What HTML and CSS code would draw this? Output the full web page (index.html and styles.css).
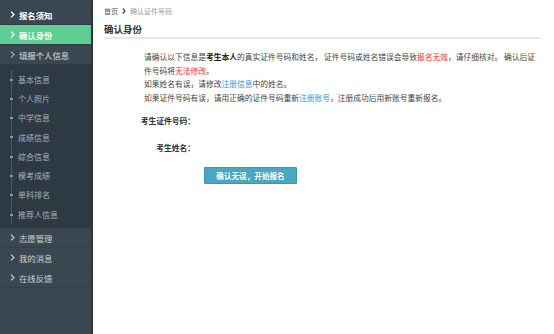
FILE: index.html
```html
<!DOCTYPE html>
<html lang="zh-CN">
<head>
    <meta charset="UTF-8">
    <meta name="viewport" content="width=device-width, initial-scale=1.0">
    <title>确认身份</title>
    <link rel="stylesheet" href="styles.css">
</head>
<body>
    <div class="layout">
        <aside class="sidebar">
            <ul class="menu">
                <li class="menu-item">
                    <svg class="arrow" width="5" height="7" viewBox="0 0 5 7"><path d="M1 0.6 L4 3.5 L1 6.4" fill="none" stroke="currentColor" stroke-width="1.3"/></svg>
                    报名须知
                </li>
                <li class="menu-item active">
                    <svg class="arrow" width="5" height="7" viewBox="0 0 5 7"><path d="M1 0.6 L4 3.5 L1 6.4" fill="none" stroke="currentColor" stroke-width="1.3"/></svg>
                    确认身份
                </li>
                <li class="menu-item muted">
                    <svg class="arrow" width="5" height="7" viewBox="0 0 5 7"><path d="M1 0.6 L4 3.5 L1 6.4" fill="none" stroke="currentColor" stroke-width="1.1"/></svg>
                    填报个人信息
                </li>
            </ul>
            <ul class="submenu">
                <li>基本信息</li>
                <li>个人照片</li>
                <li>中学信息</li>
                <li>成绩信息</li>
                <li>综合信息</li>
                <li>模考成绩</li>
                <li>单科排名</li>
                <li>推荐人信息</li>
            </ul>
            <ul class="menu lower">
                <li class="menu-item">
                    <svg class="arrow" width="5" height="7" viewBox="0 0 5 7"><path d="M1 0.6 L4 3.5 L1 6.4" fill="none" stroke="currentColor" stroke-width="1.1"/></svg>
                    志愿管理
                </li>
                <li class="menu-item">
                    <svg class="arrow" width="5" height="7" viewBox="0 0 5 7"><path d="M1 0.6 L4 3.5 L1 6.4" fill="none" stroke="currentColor" stroke-width="1.1"/></svg>
                    我的消息
                </li>
                <li class="menu-item">
                    <svg class="arrow" width="5" height="7" viewBox="0 0 5 7"><path d="M1 0.6 L4 3.5 L1 6.4" fill="none" stroke="currentColor" stroke-width="1.1"/></svg>
                    在线反馈
                </li>
            </ul>
        </aside>

        <main class="content">
            <div class="crumbs">
                <a href="#" class="crumb-home">首页</a>
                <svg class="crumb-sep" width="4" height="6" viewBox="0 0 4 6"><path d="M0.8 0.5 L3 3 L0.8 5.5" fill="none" stroke="currentColor" stroke-width="1.2"/></svg>
                <span class="crumb-current">确认证件号码</span>
            </div>
            <h2 class="page-title">确认身份</h2>

            <div class="notice">
                <p>请确认以下信息是<b>考生本人</b>的真实证件号码和姓名， 证件号码或姓名错误会导致<span class="warn">报名无效</span>，请仔细核对。 确认后证件号码将<span class="warn">无法修改</span>。</p>
                <p>如果姓名有误，请修改<a href="#">注册信息</a>中的姓名。</p>
                <p>如果证件号码有误，请用正确的证件号码重新<a href="#">注册账号</a>，注册成功后用新账号重新报名。</p>
            </div>

            <div class="info-grid">
                <div class="info-label">考生证件号码：</div>
                <div class="info-value"></div>
                <div class="info-label">考生姓名：</div>
                <div class="info-value"></div>
                <div></div>
                <div><button class="confirm-button">确认无误，开始报名</button></div>
            </div>
        </main>
    </div>
</body>
</html>
```

FILE: styles.css
```css
body {
    font-family: "Noto Sans CJK SC", "Liberation Sans", sans-serif;
    margin: 0;
    padding: 0;
    background-color: #ffffff;
    color: #333333;
}
ul {
    list-style: none;
    margin: 0;
    padding: 0;
}
.layout {
    display: flex;
    min-height: 334px;
}
.sidebar {
    width: 91px;
    padding-top: 5px;
    background-color: #3a4750;
    border-right: 2px solid #2c363e;
    flex-shrink: 0;
}
.menu-item {
    display: flex;
    align-items: center;
    height: 19px;
    padding-left: 10px;
    border-bottom: 1px solid #303c45;
    font-size: 8.4px;
    font-weight: bold;
    color: #ffffff;
}
.menu-item .arrow {
    margin-right: 4px;
}
.menu-item.active {
    background-color: #5fce95;
}
.menu-item.muted {
    color: #a9b5bd;
}
.lower .menu-item {
    font-weight: normal;
    color: #c9d3da;
    border-bottom-color: #34414a;
}
.submenu {
    position: relative;
    padding: 4.5px 0;
    background-color: #2e3a43;
}
.submenu::before {
    content: "";
    position: absolute;
    left: 11px;
    top: 5px;
    bottom: 5px;
    width: 1px;
    background-color: #4c5862;
}
.submenu li {
    position: relative;
    display: flex;
    align-items: center;
    height: 19.3px;
    padding-left: 18px;
    font-size: 8px;
    color: #a4b0b8;
}
.submenu li::before {
    content: "";
    position: absolute;
    left: 10px;
    top: 9px;
    width: 3px;
    height: 2px;
    background-color: #8d99a1;
}
.content {
    flex: 1;
    padding: 0 13px 0 11px;
}
.crumbs {
    display: flex;
    align-items: center;
    padding-top: 4px;
    height: 13px;
    font-size: 7px;
}
.crumb-home {
    color: #555555;
    text-decoration: none;
}
.crumb-sep {
    margin: 0 4px;
    color: #444444;
}
.crumb-current {
    color: #9a9a9a;
}
.page-title {
    margin: 5px 0 0;
    padding-bottom: 1px;
    font-size: 9.5px;
    line-height: 14px;
    font-weight: bold;
    color: #333333;
    border-bottom: 2px solid #e8e8e8;
}
.notice {
    width: 396px;
    margin: 11px 0 0 40px;
    font-size: 7.75px;
    line-height: 13.5px;
    color: #444444;
}
.notice p {
    margin: 0;
}
.notice b {
    color: #222222;
}
.warn {
    color: #ff2b2b;
}
.notice a {
    color: #2f95e8;
    text-decoration: none;
}
.info-grid {
    display: grid;
    grid-template-columns: 56px 1fr;
    column-gap: 9px;
    row-gap: 13.5px;
    margin: 10px 0 0 35px;
    font-size: 7.75px;
    line-height: 13.5px;
}
.info-label {
    text-align: right;
    white-space: nowrap;
    font-family: "Noto Sans CJK TC", "Noto Sans CJK SC", sans-serif;
    font-weight: bold;
    color: #333333;
}
.confirm-button {
    display: block;
    width: 93px;
    height: 17px;
    margin-top: -1px;
    padding: 0;
    font-family: "Noto Sans CJK SC", sans-serif;
    font-size: 7.6px;
    font-weight: bold;
    color: #ffffff;
    background-color: #4ba6c0;
    border: 1px solid #3d96b1;
    border-radius: 1px;
}
```
